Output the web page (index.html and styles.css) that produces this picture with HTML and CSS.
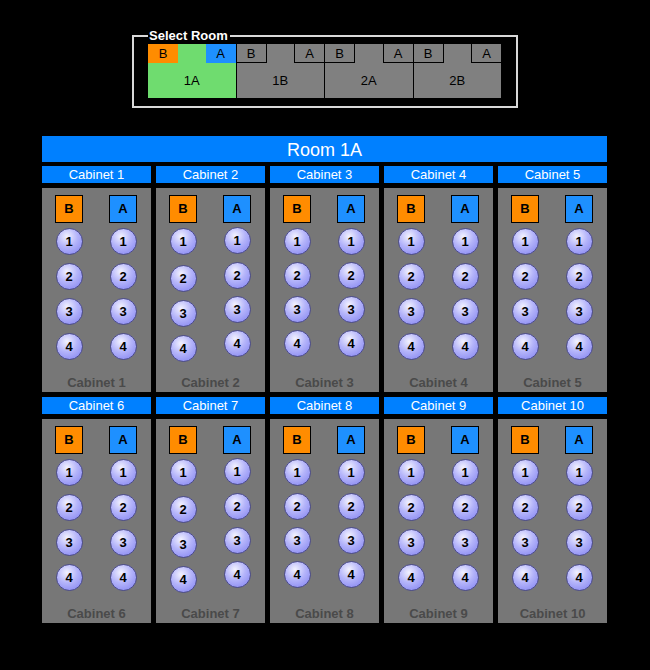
FILE: index.html
```html
<!DOCTYPE html>
<html lang="en">
<head>
    <meta charset="UTF-8">
    <title>Room 1A</title>
    <link rel="stylesheet" href="styles.css">
</head>
<body>
    <!-- Room picker -->
    <fieldset class="room-select">
        <legend>Select Room</legend>
        <div class="tabs">
            <div class="tab selected">
                <div class="tab-top"><span class="side-b">B</span><span class="side-a">A</span></div>
                <div class="tab-name">1A</div>
            </div>
            <div class="tab">
                <div class="tab-top"><span class="side-b">B</span><span class="side-a">A</span></div>
                <div class="tab-name">1B</div>
            </div>
            <div class="tab">
                <div class="tab-top"><span class="side-b">B</span><span class="side-a">A</span></div>
                <div class="tab-name">2A</div>
            </div>
            <div class="tab">
                <div class="tab-top"><span class="side-b">B</span><span class="side-a">A</span></div>
                <div class="tab-name">2B</div>
            </div>
        </div>
    </fieldset>

    <!-- Room view -->
    <div class="room">
        <div class="room-title">Room 1A</div>
        <div class="cabinets" id="cabinets"></div>
    </div>

    <script>
        const cabinets = document.getElementById('cabinets');

        function column(label, cls) {
            let html = `<div class="col"><div class="box ${cls}">${label}</div>`;
            for (let i = 1; i <= 4; i++) {
                html += `<div class="port">${i}</div>`;
            }
            return html + '</div>';
        }

        for (let n = 1; n <= 10; n++) {
            const cab = document.createElement('div');
            cab.className = 'cabinet cab-' + n;
            cab.innerHTML = `
                <div class="cab-head">Cabinet ${n}</div>
                <div class="cab-body">
                    <div class="cols">${column('B', 'box-b')}${column('A', 'box-a')}</div>
                    <div class="cab-foot">Cabinet ${n}</div>
                </div>`;
            cabinets.appendChild(cab);
        }
    </script>
</body>
</html>
```

FILE: styles.css
```css
body {
    margin: 0;
    background: #000;
    font-family: "Liberation Sans", Arial, sans-serif;
    color: #000;
}
.room-select {
    width: 354px;
    margin: 29px 0 0 132px;
    padding: 1px 14px 8px;
    border: 2px solid #d9d9d9;
}
.room-select legend {
    color: #fff;
    font-weight: bold;
    font-size: 13px;
    padding: 0 2px 0 1px;
    line-height: 14px;
}
.tabs {
    display: flex;
    width: 353px;
}
.tab {
    flex: 1;
    background: #808080;
    border-right: 1px solid #000;
    display: flex;
    flex-direction: column;
    font-size: 13px;
}
.tab:last-child {
    border-right: none;
}
.tab.selected {
    background: #6fdc6f;
}
.tab-top {
    display: flex;
    justify-content: space-between;
    height: 19px;
}
.tab-top span {
    width: 30px;
    text-align: center;
    line-height: 19px;
    box-sizing: border-box;
}
.tab .side-b {
    border-right: 1px solid #000;
    border-bottom: 1px solid #000;
}
.tab .side-a {
    border-left: 1px solid #000;
    border-bottom: 1px solid #000;
}
.tab.selected .side-b {
    background: #ff8c00;
    border: none;
}
.tab.selected .side-a {
    background: #1e90ff;
    border: none;
}
.tab-name {
    height: 35px;
    line-height: 35px;
    text-align: center;
}
.room {
    width: 565px;
    margin: 28px 0 0 42px;
}
.room-title {
    background: #0080ff;
    color: #fff;
    height: 26px;
    line-height: 28px;
    text-align: center;
    font-size: 18px;
    margin-bottom: 4px;
}
.cabinets {
    display: grid;
    grid-template-columns: repeat(5, 109px);
    gap: 5px;
}
.cabinet {
    display: flex;
    flex-direction: column;
    gap: 5px;
}
.cab-head {
    background: #0080ff;
    color: #fff;
    height: 17px;
    line-height: 18px;
    text-align: center;
    font-size: 13px;
}
.cab-body {
    background: #777;
    height: 204px;
    box-sizing: border-box;
    padding: 7px 0 1px;
    display: flex;
    flex-direction: column;
}
.cols {
    display: flex;
    justify-content: space-between;
    padding: 0 14px 0 13px;
}
.col {
    width: 28px;
    display: flex;
    flex-direction: column;
    align-items: center;
    gap: 8px;
}
.box {
    width: 28px;
    height: 28px;
    box-sizing: border-box;
    border: 1px solid #000;
    font-weight: bold;
    font-size: 13px;
    line-height: 26px;
    text-align: center;
    margin-bottom: -3px;
}
.box-b {
    background: #ff8c00;
}
.box-a {
    background: #1e90ff;
}
.port {
    position: relative;
    width: 27px;
    height: 27px;
    box-sizing: border-box;
    border-radius: 50%;
    border: 1px solid #4b4b8c;
    background: radial-gradient(circle at 40% 30%, #f2f2ff 0%, #b4b4fa 45%, #7f7ff0 100%);
    font-weight: bold;
    font-size: 13px;
    line-height: 25px;
    text-align: center;
}
/* a few cabinets sit a little unevenly */
.cab-2 .col:first-child .port:nth-child(n+3),
.cab-7 .col:first-child .port:nth-child(n+3) {
    top: 2px;
}
.cab-2 .col:last-child .port:nth-child(2),
.cab-7 .col:last-child .port:nth-child(2),
.cab-2 .col:last-child .port:nth-child(3),
.cab-7 .col:last-child .port:nth-child(3) {
    top: -1px;
}
.cab-2 .col:last-child .port:nth-child(4),
.cab-7 .col:last-child .port:nth-child(4) {
    top: -2px;
}
.cab-2 .col:last-child .port:nth-child(5),
.cab-7 .col:last-child .port:nth-child(5) {
    top: -3px;
}
.cab-3 .port:nth-child(3),
.cab-8 .port:nth-child(3) {
    top: -1px;
}
.cab-3 .port:nth-child(4),
.cab-8 .port:nth-child(4) {
    top: -2px;
}
.cab-3 .port:nth-child(5),
.cab-8 .port:nth-child(5) {
    top: -3px;
}
.cab-foot {
    margin-top: auto;
    text-align: center;
    font-weight: bold;
    font-size: 13px;
    color: #4a4a4a;
    line-height: 16px;
}
```
